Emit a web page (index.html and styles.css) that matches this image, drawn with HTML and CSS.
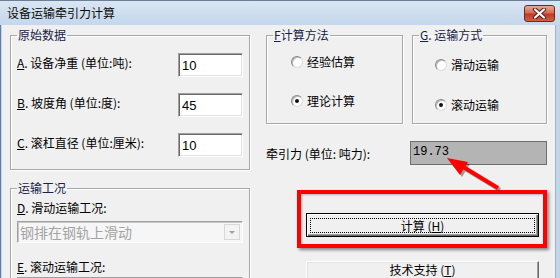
FILE: index.html
```html
<!DOCTYPE html>
<html lang="zh-CN">
<head>
    <meta charset="UTF-8">
    <title>设备运输牵引力计算</title>
    <link rel="stylesheet" href="styles.css">
</head>
<body>

    <!-- Dialog Window -->
    <div class="window">
        <div class="titlebar">
            <span class="title">设备运输牵引力计算</span>
            <button class="close-btn">
                <svg width="15" height="11" viewBox="0 0 15 11">
                    <path d="M3 1.5 L12 9.5 M12 1.5 L3 9.5" stroke="#5a2318" stroke-width="4.2" stroke-linecap="round"/>
                    <path d="M3 1.5 L12 9.5 M12 1.5 L3 9.5" stroke="#fff" stroke-width="2.2" stroke-linecap="round"/>
                </svg>
            </button>
        </div>

        <div class="frame">
            <div class="client">

                <!-- Left column: input data -->
                <div class="col-left">
                    <fieldset class="group group-data">
                        <legend>原始数据</legend>
                        <div class="field-row">
                            <label><u>A</u>. 设备净重 (单位:吨):</label>
                            <input class="edit" type="text" value="10">
                        </div>
                        <div class="field-row">
                            <label><u>B</u>. 坡度角 (单位:度):</label>
                            <input class="edit" type="text" value="45">
                        </div>
                        <div class="field-row">
                            <label><u>C</u>. 滚杠直径 (单位:厘米):</label>
                            <input class="edit" type="text" value="10">
                        </div>
                    </fieldset>

                    <fieldset class="group group-cond">
                        <legend>运输工况</legend>
                        <div class="cond-label"><u>D</u>. 滑动运输工况:</div>
                        <div class="combo">
                            <span class="combo-text">钢排在钢轨上滑动</span>
                            <span class="combo-arrow"></span>
                        </div>
                        <div class="cond-label cond-label-e"><u>E</u>. 滚动运输工况:</div>
                        <div class="combo combo-second"></div>
                    </fieldset>
                </div>

                <!-- Right column: options and result -->
                <div class="col-right">
                    <div class="option-groups">
                        <fieldset class="group group-method">
                            <legend><u>F</u>计算方法</legend>
                            <div class="radio-row">
                                <span class="radio"></span>经验估算
                            </div>
                            <div class="radio-row radio-row-2">
                                <span class="radio checked"></span>理论计算
                            </div>
                        </fieldset>
                        <fieldset class="group group-mode">
                            <legend><u>G</u>. 运输方式</legend>
                            <div class="radio-row">
                                <span class="radio"></span>滑动运输
                            </div>
                            <div class="radio-row radio-row-2">
                                <span class="radio checked"></span>滚动运输
                            </div>
                        </fieldset>
                    </div>

                    <div class="result-row">
                        <span class="result-label">牵引力 (单位: 吨力):</span>
                        <div class="result">19.73</div>
                    </div>

                    <button class="btn btn-default"><span class="focus">计算 (<u>H</u>)</span></button>
                    <button class="btn btn-support">技术支持 (<u>T</u>)</button>
                </div>

            </div>
        </div>

        <!-- Red annotation over the dialog -->
        <div class="callout-box"></div>
        <svg class="callout-arrow" width="560" height="278" viewBox="0 0 560 278">
            <g transform="translate(2 2)" opacity="0.35">
                <line x1="498" y1="188" x2="460" y2="165" stroke="#000" stroke-width="4"/>
                <polygon points="447,158 468,162 460,175" fill="#000"/>
            </g>
            <line x1="498" y1="188" x2="460" y2="165" stroke="#f00" stroke-width="4"/>
            <polygon points="447,158 468,162 460,175" fill="#f00"/>
        </svg>
    </div>

</body>
</html>
```

FILE: styles.css
```css
/* Basic Reset */
* {
    margin: 0;
    padding: 0;
    box-sizing: border-box;
}

body {
    background: #f0f0f0;
    font-family: "Noto Sans CJK SC", "Liberation Sans", sans-serif;
    font-size: 12px;
    color: #000;
}

u {
    text-decoration: underline;
    text-underline-offset: 1px;
}

/* Window */
.window {
    position: relative;
    width: 560px;
    height: 278px;
    overflow: hidden;
    display: flex;
    flex-direction: column;
    background: #c2d5ea;
}

.titlebar {
    height: 25px;
    flex-shrink: 0;
    display: flex;
    justify-content: space-between;
    align-items: flex-start;
    padding: 0 5px 0 7px;
    background: linear-gradient(to bottom, #d9e5f2, #c4d7eb);
    border-top: 1px solid #6d7f96;
}

.title {
    line-height: 24px;
    font-size: 12px;
    color: #0a0a0a;
}

.close-btn {
    width: 31px;
    height: 17px;
    margin-top: 4px;
    border: 1px solid #6b2a1e;
    border-radius: 3px;
    background: linear-gradient(to bottom, #e9a999 0%, #d46a55 45%, #c0391f 55%, #d0604a 100%);
    display: flex;
    justify-content: center;
    align-items: center;
}

.frame {
    flex: 1;
    display: flex;
    border-left: 1px solid #5f7fa6;
    padding-left: 1px;
    padding-right: 4px;
    background: #c2d5ea;
}

.client {
    flex: 1;
    display: flex;
    gap: 16px;
    padding: 3px 0 0 8px;
    background: #f0f0f0;
    border-right: 1px solid #9fb3c9;
}

/* Group boxes */
.group {
    border: 1px solid #a8a8a8;
    box-shadow: inset 1px 1px 0 #fff, 1px 1px 0 #fff;
    padding: 0 6px;
    margin: 0;
    min-width: 0;
}

.group legend {
    padding: 0 1px;
    line-height: 14px;
    font-size: 12px;
    color: #16224a;
}

.col-left {
    width: 240px;
    flex-shrink: 0;
}

.group-data {
    padding-top: 11px;
    padding-bottom: 12px;
}

.field-row {
    display: flex;
    justify-content: space-between;
    align-items: flex-start;
    height: 24px;
}

.field-row + .field-row {
    margin-top: 16px;
}

.field-row label {
    padding-top: 3px;
    line-height: 14px;
    white-space: pre;
}

.edit {
    width: 65px;
    height: 24px;
    border: 1px solid;
    border-color: #a0a0a0 #fff #fff #a0a0a0;
    box-shadow: inset 1px 1px 0 #696969, inset -1px -1px 0 #e3e3e3;
    background: #fff;
    font-family: "Liberation Sans", sans-serif;
    font-size: 13px;
    padding: 1px 0 0 3px;
    outline: none;
}

.group-cond {
    margin-top: 11px;
    padding-top: 6px;
    padding-bottom: 20px;
}

.cond-label {
    line-height: 14px;
}

.cond-label-e {
    margin-top: 17px;
}

.combo {
    margin-top: 6px;
    height: 22px;
    display: flex;
    justify-content: space-between;
    align-items: center;
    border: 1px solid;
    border-color: #a0a0a0 #fff #fff #a0a0a0;
    box-shadow: inset 1px 1px 0 #c8c8c8;
    background: #f6f6f6;
    padding: 0 2px 0 2px;
}

.combo-second {
    margin-top: 3px;
}

.combo-text {
    font-size: 14px;
    line-height: 18px;
    color: #a3a3a3;
}

.combo-arrow {
    position: relative;
    width: 16px;
    height: 16px;
    border: 1px solid #d8d8d8;
    background: #f3f3f3;
}

.combo-arrow::after {
    content: "";
    position: absolute;
    left: 4px;
    top: 6px;
    border-left: 3px solid transparent;
    border-right: 3px solid transparent;
    border-top: 3px solid #a0a0a0;
}

/* Right column */
.col-right {
    width: 281px;
    flex-shrink: 0;
}

.option-groups {
    display: flex;
    gap: 9px;
}

.group-method {
    width: 137px;
    padding-top: 13px;
    padding-bottom: 15px;
}

.group-mode {
    width: 135px;
    padding-top: 16px;
    padding-bottom: 11px;
}

.radio-row {
    display: flex;
    align-items: center;
    gap: 4px;
    height: 14px;
    line-height: 14px;
}

.group-method .radio-row {
    margin-left: 18px;
}

.group-mode .radio-row {
    margin-left: 16px;
}

.group-method .radio-row-2 {
    margin-top: 25px;
}

.group-mode .radio-row-2 {
    margin-top: 26px;
}

.radio {
    position: relative;
    width: 12px;
    height: 12px;
    border-radius: 50%;
    border: 1px solid;
    border-color: #8a8a8a #dcdcdc #dcdcdc #8a8a8a;
    background: radial-gradient(circle at 60% 60%, #fff 55%, #e6e6e6);
    box-shadow: inset 1px 1px 0 #b8b8b8;
}

.radio.checked::after {
    content: "";
    position: absolute;
    left: 3px;
    top: 3px;
    width: 4px;
    height: 4px;
    border-radius: 50%;
    background: #111;
}

.result-row {
    display: flex;
    justify-content: space-between;
    align-items: center;
    margin-top: 17px;
}

.result-label {
    white-space: pre;
}

.result {
    width: 137px;
    height: 24px;
    background: #b4b4b4;
    border: 1px solid #6e6e6e;
    font-family: "Liberation Mono", monospace;
    font-size: 12px;
    line-height: 14px;
    padding: 3px 0 0 2px;
}

/* Buttons */
.btn {
    display: block;
    width: 233px;
    height: 24px;
    margin-left: 40px;
    background: #f0f0f0;
    border: 1px solid;
    border-color: #fff #696969 #696969 #fff;
    box-shadow: inset -1px -1px 0 #a0a0a0, inset 1px 1px 0 #e3e3e3;
    font-family: "Noto Sans CJK SC", sans-serif;
    font-size: 12px;
    line-height: 14px;
    color: #000;
    white-space: pre;
}

.btn-default {
    margin-top: 48px;
    border-color: #000;
    box-shadow: inset 1px 1px 0 #fff, inset -1px -1px 0 #696969, inset -2px -2px 0 #a0a0a0;
    padding: 3px;
}

.btn-default .focus {
    display: block;
    height: 15px;
    border: 1px dotted #000;
}

.btn-support {
    margin-top: 24px;
    padding-bottom: 7px;
}

/* Annotation */
.callout-box {
    position: absolute;
    left: 297px;
    top: 190px;
    width: 250px;
    height: 58px;
    border: 4px solid #f00;
    box-shadow: 2px 2px 3px rgba(0, 0, 0, 0.45), inset 1px 1px 2px rgba(0, 0, 0, 0.25);
}

.callout-arrow {
    position: absolute;
    left: 0;
    top: 0;
    pointer-events: none;
}
```
